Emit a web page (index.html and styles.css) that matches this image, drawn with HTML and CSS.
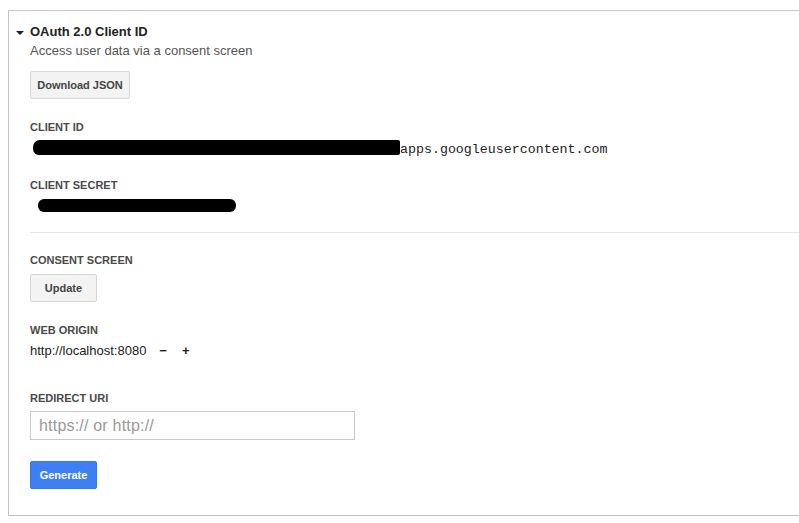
FILE: index.html
```html
<!DOCTYPE html>
<html>
<head>
<meta charset="utf-8">
<title>OAuth 2.0 Client ID</title>
<link rel="stylesheet" href="styles.css">
</head>
<body>
<div class="panel">
  <div class="header">
    <div class="toggle"><span class="caret"></span></div>
    <div class="title">OAuth 2.0 Client ID</div>
  </div>
  <div class="section">
    <div class="subtitle">Access user data via a consent screen</div>
    <button class="btn btn-download">Download JSON</button>

    <div class="label label-client-id">CLIENT ID</div>
    <div class="value-row">
      <span class="redact redact-id"></span><span class="mono">apps.googleusercontent.com</span>
    </div>

    <div class="label label-secret">CLIENT SECRET</div>
    <div class="secret-row">
      <span class="redact redact-secret"></span>
    </div>
  </div>

  <div class="divider"></div>

  <div class="section">
    <div class="label label-consent">CONSENT SCREEN</div>
    <button class="btn btn-update">Update</button>

    <div class="label label-origin">WEB ORIGIN</div>
    <div class="origin-row">
      <span class="origin">http://localhost:8080</span>
      <span class="op op-minus">&minus;</span>
      <span class="op op-plus">+</span>
    </div>

    <div class="label label-redirect">REDIRECT URI</div>
    <input class="uri-input" type="text" placeholder="https:// or http://">

    <button class="btn btn-primary">Generate</button>
  </div>
</div>
</body>
</html>
```

FILE: styles.css
```css
html, body {
  margin: 0;
  padding: 0;
  background: #ffffff;
}

body {
  font-family: "Liberation Sans", Arial, Helvetica, sans-serif;
  color: #222;
  overflow: hidden;
}

.panel {
  margin: 10px 0 0 8px;
  border-top: 1px solid #c6c6c6;
  border-left: 1px solid #c6c6c6;
  border-bottom: 1px solid #c0c0c0;
  box-shadow: 0 1px 1px rgba(0, 0, 0, 0.06);
  padding: 13px 0 26px 0;
}

.header {
  display: flex;
  align-items: flex-start;
}

.toggle {
  width: 21px;
  height: 16px;
  display: flex;
  align-items: center;
  padding-left: 7px;
  box-sizing: border-box;
}

.caret {
  display: block;
  width: 0;
  height: 0;
  border-left: 4px solid transparent;
  border-right: 4px solid transparent;
  border-top: 4px solid #222;
  margin-top: 2px;
}

.title {
  font-size: 13px;
  line-height: 16px;
  font-weight: bold;
  color: #222;
}

.section {
  padding-left: 21px;
}

.subtitle {
  font-size: 13px;
  line-height: 16px;
  color: #555;
  margin-top: 3px;
}

.btn {
  display: block;
  box-sizing: border-box;
  height: 28px;
  min-width: 67px;
  padding: 0 6px;
  border: 1px solid #d6d6d6;
  border-radius: 2px;
  background: #f3f3f3;
  font-family: "Liberation Sans", Arial, Helvetica, sans-serif;
  font-size: 11px;
  font-weight: bold;
  line-height: 26px;
  color: #444;
  text-align: center;
}

.btn-download {
  margin-top: 12px;
  width: 100px;
}

.label {
  font-size: 11px;
  line-height: 14px;
  font-weight: bold;
  color: #4a4a4a;
}

.label-client-id { margin-top: 21px; }
.label-secret { margin-top: 20px; }
.label-consent { margin-top: 20px; }
.label-origin { margin-top: 21px; }
.label-redirect { margin-top: 32px; }

.value-row {
  display: flex;
  align-items: flex-start;
  margin-top: 8px;
  height: 16px;
}

.redact {
  display: block;
  background: #000;
}

.redact-id {
  margin-top: -2px;
  margin-left: 3px;
  width: 367px;
  height: 15px;
  border-radius: 7px 2px 2px 6px;
}

.mono {
  font-family: "Liberation Mono", "Courier New", monospace;
  font-size: 13.3px;
  line-height: 16px;
  color: #222;
}

.secret-row {
  margin-top: 7px;
  height: 13px;
  display: flex;
}

.redact-secret {
  margin-left: 8px;
  width: 198px;
  height: 13px;
  border-radius: 6px;
}

.divider {
  margin: 20px 0 0 21px;
  height: 1px;
  background: #e5e5e5;
}

.btn-update {
  margin-top: 7px;
}

.origin-row {
  display: flex;
  align-items: baseline;
  margin-top: 6px;
  font-size: 13px;
  line-height: 16px;
  color: #222;
}

.op {
  font-weight: bold;
  color: #222;
}

.op-minus { margin-left: 13px; }
.op-plus { margin-left: 15px; }

.uri-input {
  display: block;
  box-sizing: border-box;
  margin-top: 6px;
  width: 325px;
  height: 29px;
  border: 1px solid #c8c8c8;
  border-radius: 0;
  padding: 0 8px;
  font-family: "Liberation Sans", Arial, Helvetica, sans-serif;
  font-size: 16px;
  color: #333;
  outline: none;
  background: #fff;
}

.uri-input::placeholder {
  color: #999;
  letter-spacing: 0.2px;
}

.btn-primary {
  margin-top: 21px;
  background: #3e80f4;
  border-color: #3079ed;
  color: #fff;
}
```
